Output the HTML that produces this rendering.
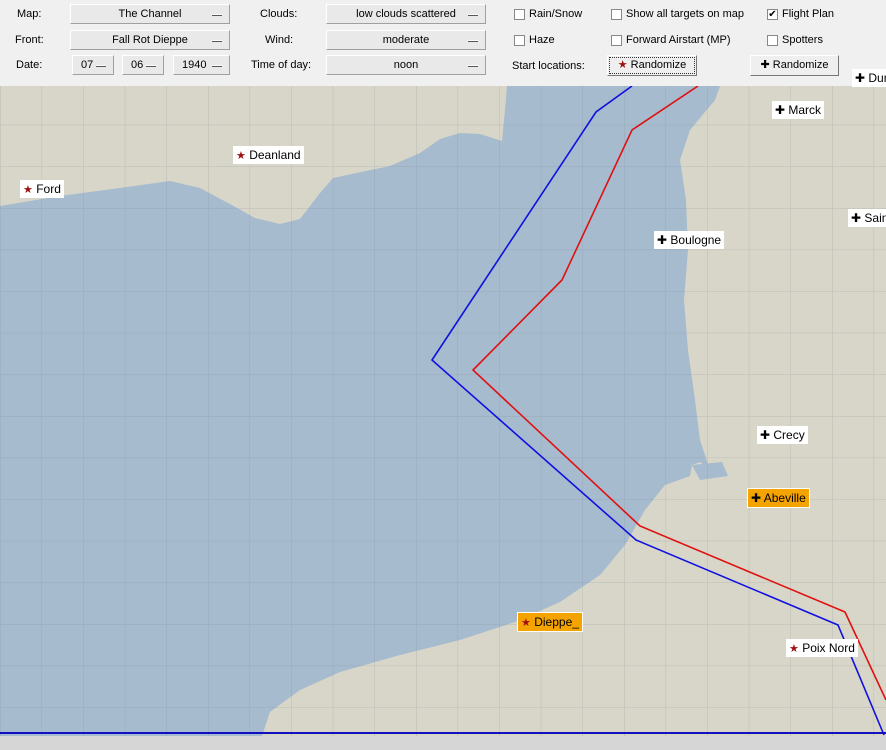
<!DOCTYPE html>
<html><head><meta charset="utf-8"><style>
body{margin:0;width:886px;height:750px;background:#f0f0f0;font-family:"Liberation Sans",sans-serif;font-size:11px;color:#000;position:relative;overflow:hidden}
.a{position:absolute}
.lbl{position:absolute;line-height:20px}
.cb{position:absolute;height:20px;background:#e9e9e9;border:1px solid #fff;border-right-color:#a0a0a0;border-bottom-color:#a0a0a0;box-sizing:border-box;text-align:center;line-height:18px}
.cb:after{content:"";position:absolute;right:7px;top:9px;width:10px;height:2px;border-top:1px solid #fff;border-bottom:1px solid #555;box-sizing:border-box}
.chk{position:absolute;width:11px;height:11px;border:1px solid #888;background:#fff;box-sizing:border-box}
.btn{position:absolute;height:21px;background:#efefef;border:1px solid #fff;border-right-color:#777;border-bottom-color:#777;box-sizing:border-box;text-align:center;line-height:19px}
.tag{position:absolute;height:18px;background:#fff;font-size:12px;line-height:18px;padding:0 3px;box-sizing:border-box;white-space:nowrap}
.or{background:#f5a300;outline:1px solid #fff}
.st{color:#a01010;font-size:11px}
</style></head><body>
<div class="lbl" style="left:17px;top:4px">Map:</div>
<div class="lbl" style="left:15px;top:30px">Front:</div>
<div class="lbl" style="left:16px;top:55px">Date:</div>
<div class="cb" style="left:70px;top:4px;width:160px">The Channel</div>
<div class="cb" style="left:70px;top:30px;width:160px">Fall Rot Dieppe</div>
<div class="cb" style="left:72px;top:55px;width:42px;text-align:left;padding-left:8px">07</div>
<div class="cb" style="left:122px;top:55px;width:42px;text-align:left;padding-left:8px">06</div>
<div class="cb" style="left:173px;top:55px;width:57px;text-align:left;padding-left:8px">1940</div>
<div class="lbl" style="left:260px;top:4px">Clouds:</div>
<div class="lbl" style="left:265px;top:30px">Wind:</div>
<div class="lbl" style="left:251px;top:55px">Time of day:</div>
<div class="cb" style="left:326px;top:4px;width:160px">low clouds scattered</div>
<div class="cb" style="left:326px;top:30px;width:160px">moderate</div>
<div class="cb" style="left:326px;top:55px;width:160px">noon</div>
<div class="chk" style="left:514px;top:9px"></div><div class="lbl" style="left:529px;top:4px">Rain/Snow</div>
<div class="chk" style="left:514px;top:35px"></div><div class="lbl" style="left:529px;top:30px">Haze</div>
<div class="lbl" style="left:512px;top:56px">Start locations:</div>
<div class="chk" style="left:611px;top:9px"></div><div class="lbl" style="left:626px;top:4px">Show all targets on map</div>
<div class="chk" style="left:611px;top:35px"></div><div class="lbl" style="left:626px;top:30px">Forward Airstart (MP)</div>
<div class="chk" style="left:767px;top:9px;font-size:10px;line-height:9px;text-align:center">✔</div><div class="lbl" style="left:782px;top:4px">Flight Plan</div>
<div class="chk" style="left:767px;top:35px"></div><div class="lbl" style="left:782px;top:30px">Spotters</div>
<div class="btn" style="left:607px;top:55px;width:90px;outline:1px dotted #333;outline-offset:-3px"><span class="st">★</span> Randomize</div>
<div class="btn" style="left:750px;top:55px;width:89px">✚ Randomize</div>

<svg class="a" style="left:0;top:86px" width="886" height="650" viewBox="0 86 886 650">
<defs><pattern id="g" x="0" y="0" width="41.6" height="41.6" patternUnits="userSpaceOnUse"><path d="M0 0H41.6M0 0V41.6" stroke="#7d8a96" stroke-opacity=".35" fill="none" stroke-width="1"/></pattern></defs>
<rect x="0" y="86" width="886" height="650" fill="#a6bbce"/>
<path d="M0 86H507L505 110 502 141 480 134 460 133 440 139 420 153 390 166 333 178 320 193 300 219 280 224 255 218 230 204 200 188 170 181 120 188 60 196 0 206Z" fill="#d8d6c8"/>
<path d="M720 86H886V736H262L270 712 300 690 340 672 400 655 460 640 515 622 560 602 600 575 625 545 645 510 665 485 690 476 692 465 700 462 710 470 700 440 695 400 688 350 684 300 688 250 686 200 680 160 690 130 715 100Z" fill="#d8d6c8"/>
<path d="M692 465 722 462 728 476 700 480Z" fill="#a6bbce"/>
<rect x="0" y="86" width="886" height="650" fill="url(#g)"/>
<polyline points="632,86 596,112 432,360 636,540 838,625 884,735" fill="none" stroke="#1010e0" stroke-width="1.6"/>
<polyline points="698,86 632,130 562,280 473,370 640,526 845,612 886,700" fill="none" stroke="#e01010" stroke-width="1.6"/>
<line x1="0" y1="733" x2="886" y2="733" stroke="#1010c0" stroke-width="2"/>
</svg>
<div class="a" style="left:0;top:736px;width:886px;height:14px;background:#d6d6d6"></div>

<div class="tag" style="left:20px;top:180px"><span class="st">★</span> Ford</div>
<div class="tag" style="left:233px;top:146px"><span class="st">★</span> Deanland</div>
<div class="tag" style="left:772px;top:101px">✚ Marck</div>
<div class="tag" style="left:654px;top:231px">✚ Boulogne</div>
<div class="tag" style="left:848px;top:209px">✚ Saint</div>
<div class="tag" style="left:852px;top:69px">✚ Dun</div>
<div class="tag" style="left:757px;top:426px">✚ Crecy</div>
<div class="tag or" style="left:748px;top:489px">✚ Abeville</div>
<div class="tag or" style="left:518px;top:613px"><span class="st">★</span> Dieppe_</div>
<div class="tag" style="left:786px;top:639px"><span class="st">★</span> Poix Nord</div>
</body></html>
